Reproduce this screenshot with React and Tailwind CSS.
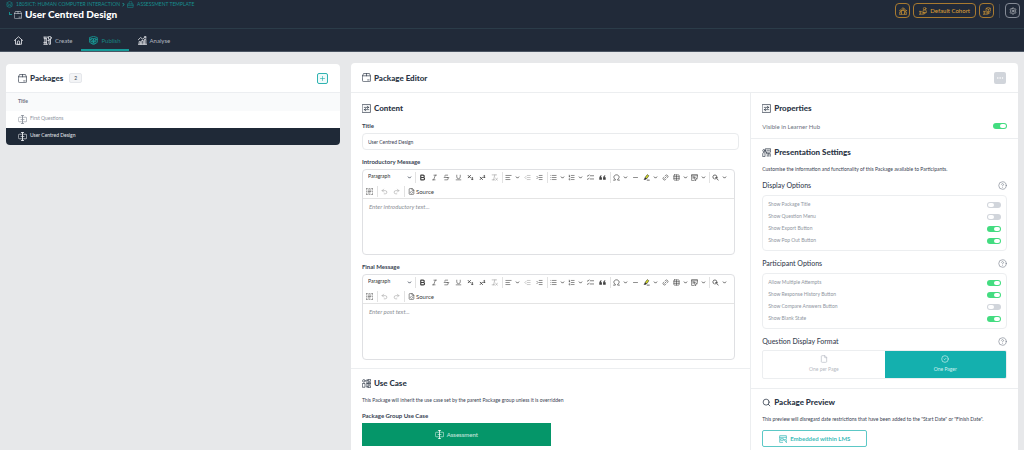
import React, { useState } from "react";
import {
  AlignLeft,
  Bold,
  ChevronDown,
  ChevronRight,
  CircleCheck,
  CircleHelp,
  Ellipsis,
  File,
  FileCode,
  IndentDecrease,
  IndentIncrease,
  Italic,
  Layers,
  Link2,
  List,
  ListOrdered,
  Minus,
  Plus,
  Redo2,
  Search,
  Settings,
  Strikethrough,
  Subscript,
  Superscript,
  Table,
  Underline,
  Undo2,
} from "lucide-react";

const Svg = ({ children, className, width = 1.8 }) => (
  <svg
    viewBox="0 0 24 24"
    fill="none"
    stroke="currentColor"
    strokeWidth={width}
    strokeLinecap="round"
    strokeLinejoin="round"
    className={className}
    aria-hidden="true"
  >
    {children}
  </svg>
);

const PackageIcon = ({ className }) => (
  <Svg className={className} width={1.8}>
    <path d="M1.500 7.500h21V21a2 2 0 0 1-2 2h-17a2 2 0 0 1-2-2z" />
    <path d="M1.500 7.500l2.500-6h16l2.500 6M12 7.500v-6M15 18.500h4" />
  </Svg>
);

const HomeIcon = ({ className }) => (
  <Svg className={className} width={2.2}>
    <path d="M1 12L12 2l11 10" />
    <path d="M4 10v12h16V10" />
    <path d="M9 22v-6a3 3 0 0 1 6 0v6z" />
  </Svg>
);

const CreateIcon = ({ className }) => (
  <Svg className={className} width={2.2}>
    <path d="M2 3h13M5 3v19M9 7v15M2 22h10M3 7h6" />
    <circle cx="18" cy="5" r="4" />
    <path d="M16 9v13h4V9M13 12h3M2 17h7" />
  </Svg>
);

const PublishIcon = ({ className }) => (
  <Svg className={className} width={2.2}>
    <path d="M2 4l10-3 10 3v13l-10 6-10-6z" />
    <rect x="6" y="7" width="12" height="8" />
    <path d="M9 12l3-3 3 3M12 9v9M2 9h4M18 9h4M7 19h10" />
  </Svg>
);

const AnalyseIcon = ({ className }) => (
  <Svg className={className} width={2.2}>
    <path d="M1 10l6-6 5 4 9-6M17 2h4v4" />
    <path d="M3 22v-7h4v7M10 22V12h4v10M17 22V9h4v13M1 22h22" />
  </Svg>
);

const AssessmentIcon = ({ className }) => (
  <Svg className={className}>
    <path d="M9 6H4a3 3 0 0 0-3 3v6a3 3 0 0 0 3 3h5M15 6h6a2 2 0 0 1 2 2v8a2 2 0 0 1-2 2h-6" />
    <path d="M12 1v22M9 1h6M9 23h6" strokeWidth="2.600" />
    <path d="M8 12h8" />
  </Svg>
);

const SlidersIcon = ({ className }) => (
  <Svg className={className}>
    <rect x="1.500" y="1.500" width="21" height="21" />
    <path d="M6 9h12M14 6l4 3-4 3M18 15H6M10 12l-4 3 4 3" />
  </Svg>
);

const UseCaseIcon = ({ className }) => (
  <Svg className={className}>
    <circle cx="5" cy="5" r="3.500" />
    <path d="M2 12h6v10H2zM13 12h9M13 3v18M13 3h4M13 21h4" />
    <rect x="17" y="1" width="6" height="5" />
    <rect x="17" y="9" width="6" height="5" />
    <rect x="17" y="18" width="6" height="5" />
  </Svg>
);

const PresentationIcon = ({ className }) => (
  <Svg className={className}>
    <rect x="10" y="2" width="13" height="9" />
    <circle cx="5" cy="7" r="3" />
    <path d="M2 22v-7a3 3 0 0 1 6 0v7zM13 6h7M12 11v4h6v7M18 15h4v7M14 18v4" />
  </Svg>
);

const BoxIcon = ({ className }) => (
  <Svg className={className}>
    <path d="M3 10h18v12H3zM7 10V6a5 5 0 0 1 10 0v4M3 15h18" />
  </Svg>
);

const GroupIcon = ({ className }) => (
  <Svg className={className}>
    <circle cx="12" cy="6" r="3.500" />
    <circle cx="4.500" cy="11" r="2.500" />
    <circle cx="19.500" cy="11" r="2.500" />
    <path d="M7 21v-6a5 5 0 0 1 10 0v6zM1 21v-3a3 3 0 0 1 6 0v3zM17 21v-3a3 3 0 0 1 6 0v3z" />
  </Svg>
);

const HandUserIcon = ({ className }) => (
  <Svg className={className}>
    <circle cx="17" cy="5" r="4" />
    <path d="M12 15v-2a5 5 0 0 1 10 0v2zM1 13h4v9H1zM5 14c4-1 5 1 7 3h4c2 0 2 2 0 2h-5M5 21c8 3 10 1 17-5" />
  </Svg>
);

const HandBoxIcon = ({ className }) => (
  <Svg className={className}>
    <path d="M10 4l6-3 6 3v8l-6 3-6-3zM10 4l6 3 6-3M16 7v8M1 13h4v9H1zM5 14c4-1 5 1 7 3h4c2 0 2 2 0 2h-5M5 21c8 3 10 1 17-5" />
  </Svg>
);

const QuoteIcon = ({ className }) => (
  <svg viewBox="0 0 24 24" fill="currentColor" className={className} aria-hidden="true">
    <path d="M8 4C4 5 1 9 1 14v6h9v-9H6c0-2 1-3 3-4zM21 4c-4 1-7 5-7 10v6h9v-9h-4c0-2 1-3 3-4z" />
  </svg>
);

const OmegaIcon = ({ className }) => (
  <Svg className={className} width={2.4}>
    <path d="M2 21h6v-3a9 8 0 1 1 8 0v3h6" />
  </Svg>
);

const HighlightIcon = ({ className }) => (
  <svg viewBox="0 0 24 24" className={className} aria-hidden="true">
    <path d="M7 12l8-10 5 4-7 10z" fill="#d9e021" stroke="#333" strokeWidth="2" />
    <path d="M7 12l6 4-4 4H2z" fill="#333" />
    <path d="M13 21h10" stroke="#333" strokeWidth="2.500" />
  </svg>
);

const EmbedIcon = ({ className }) => (
  <Svg className={className} width={2}>
    <path d="M22 12V2H2v20h9M2 6h20M6 10h5M6 14h3" />
    <path d="M11 11l11 5-5 1-1 5z" />
  </Svg>
);

const FindIcon = ({ className }) => (
  <Svg className={className} width={2.6}>
    <path d="M8 17a7 7 0 1 1 9-7M14 12l7 9M13 17v-5h5" />
  </Svg>
);

const SelectAllIcon = ({ className }) => (
  <Svg className={className} width={2}>
    <path d="M1 5V1h4M19 1h4v4M23 19v4h-4M5 23H1v-4M10 1h4M10 23h4M1 10v4M23 10v4" />
    <path d="M7 7h10M7 12h10M7 17h7" />
  </Svg>
);

const ClearFormatIcon = ({ className }) => (
  <Svg className={className} width={2.2}>
    <path d="M4 3h15M13 3L9 20M4 20h8M16 15l6 6M22 15l-6 6" />
  </Svg>
);

const TodoIcon = ({ className }) => (
  <Svg className={className} width={2.2}>
    <path d="M1 6l2 2 4-5M11 6h12M1 17l2 2 4-5M11 17h12" />
  </Svg>
);

const BrowserIcon = ({ className }) => (
  <Svg className={className} width={2.2}>
    <path d="M22 11V2H2v20h9M2 7h20M6 11h7v5H6zM15 14h7v8M15 14l7 8" />
  </Svg>
);

const Switch = ({ label, on, textClass }) => {
  const [checked, setChecked] = useState(on);
  return (
    <label className={`flex items-center justify-between ${textClass}`}>
      <span>{label}</span>
      <input
        type="checkbox"
        role="switch"
        checked={checked}
        onChange={() => setChecked(!checked)}
        className="h-1.5 w-3.5 shrink-0 appearance-none rounded-sm bg-[#d1d5db] p-px before:block before:h-1 before:w-1.5 before:rounded-xs before:bg-white checked:bg-[#43dc80] checked:before:ml-1.5"
      />
    </label>
  );
};

const Heading = ({ icon: Icon, children }) => (
  <h2 className="flex h-3 items-center gap-[3px] text-[8px] leading-3 font-black text-[#2b3545]">
    <Icon className="size-[9px]" />
    {children}
  </h2>
);

const Tool = ({ label, icon: Icon, dim, menu }) => (
  <button
    type="button"
    aria-label={label}
    className={`flex h-3.5 items-center justify-center gap-[3px] ${menu ? "w-[18px]" : "w-3"} ${
      dim ? "text-[#a3a3a3]" : "text-[#404040]"
    }`}
  >
    <Icon className="size-[7px]" />
    {menu && <ChevronDown className="size-[5px]" strokeWidth={4} />}
  </button>
);

const Sep = () => <span className="mx-px h-[11px] w-px bg-[#e2e2e2]" />;

const MessageEditor = ({ id, label, placeholder }) => (
  <div>
    <label htmlFor={id} className="block text-[6px] leading-2 font-bold text-[#374151]">
      {label}
    </label>
    <div className="mt-[3px] mr-1 overflow-hidden rounded-sm border border-[#dfe0e3]">
      <div className="border-b border-[#e4e4e4]">
        <div className="flex items-center">
          <div className="relative flex w-[51px] items-center">
            <select
              aria-label={`${label} style`}
              className="h-3.5 w-full appearance-none bg-transparent pl-[5px] text-[5px] font-medium text-[#404040]"
            >
              <option>Paragraph</option>
            </select>
            <ChevronDown className="pointer-events-none absolute right-0.5 size-[5px]" strokeWidth={4} />
          </div>
          <Sep />
          <Tool label="Bold" icon={(p) => <Bold {...p} strokeWidth={4} />} />
          <Tool label="Italic" icon={Italic} />
          <Tool label="Strikethrough" icon={Strikethrough} />
          <Tool label="Underline" icon={Underline} />
          <Tool label="Subscript" icon={(p) => <Subscript {...p} strokeWidth={3} />} />
          <Tool label="Superscript" icon={(p) => <Superscript {...p} strokeWidth={3} />} />
          <Tool label="Remove format" icon={ClearFormatIcon} dim />
          <Sep />
          <Tool label="Text alignment" icon={AlignLeft} menu />
          <Tool label="Decrease indent" icon={IndentDecrease} dim />
          <Tool label="Increase indent" icon={IndentIncrease} />
          <Sep />
          <Tool label="Bulleted list" icon={List} menu />
          <Tool label="Numbered list" icon={ListOrdered} menu />
          <Tool label="To-do list" icon={TodoIcon} />
          <Tool label="Block quote" icon={QuoteIcon} />
          <Sep />
          <Tool label="Special characters" icon={OmegaIcon} menu />
          <Tool label="Horizontal line" icon={Minus} />
          <Tool label="Highlight" icon={HighlightIcon} menu />
          <Tool label="Link" icon={(p) => <Link2 {...p} className="size-[7px] -rotate-45" />} />
          <Tool label="Insert table" icon={Table} menu />
          <Tool label="Embed" icon={EmbedIcon} menu />
          <Sep />
          <Tool label="Find and replace" icon={FindIcon} menu />
        </div>
        <div className="flex items-center pl-px">
          <Tool label="Select all" icon={SelectAllIcon} />
          <Sep />
          <Tool label="Undo" icon={Undo2} dim />
          <Tool label="Redo" icon={Redo2} dim />
          <Sep />
          <button
            type="button"
            className="flex h-3.5 items-center gap-px px-0.5 text-[6px] text-[#404040]"
          >
            <FileCode className="size-[7px]" />
            Source
          </button>
        </div>
      </div>
      <textarea
        id={id}
        placeholder={placeholder}
        className="block h-[55px] w-full resize-none px-1.5 py-1 text-[6px] leading-2 italic outline-none placeholder:text-[#8b8f96]"
      />
    </div>
  </div>
);

const SubHeading = ({ children }) => (
  <div className="flex h-2.5 items-center justify-between">
    <h3 className="text-[7px] font-medium text-[#374151]">{children}</h3>
    <button type="button" aria-label={`Help: ${children}`} className="text-[#6b7280]">
      <CircleHelp className="size-[9px]" strokeWidth={1.5} />
    </button>
  </div>
);

const OptionGroup = ({ title, options }) => (
  <div className="mb-[7px]">
    <SubHeading>{title}</SubHeading>
    <div className="mt-[5px] rounded-sm border border-[#eceef0] px-[5px] py-[3px]">
      {options.map(([label, on]) => (
        <Switch
          key={label}
          label={label}
          on={on}
          textClass="h-3 text-[5px] text-[#8f96a1]"
        />
      ))}
    </div>
  </div>
);

const displayOptions = [
  ["Show Package Title", false],
  ["Show Question Menu", false],
  ["Show Export Button", true],
  ["Show Pop Out Button", true],
];

const participantOptions = [
  ["Allow Multiple Attempts", true],
  ["Show Response History Button", true],
  ["Show Compare Answers Button", false],
  ["Show Blank State", true],
];

const App = () => {
  const [title, setTitle] = useState("User Centred Design");

  return (
    <div className="flex min-h-screen flex-col bg-[#e7e8ea] font-['Lato','Open_Sans',sans-serif] text-[#374151]">
      <header className="bg-[#212a39]">
        <div className="flex h-[29px] items-start justify-between border-b border-[#2b3c49] pr-1 pl-1.5">
          <div>
            <nav className="flex h-[9px] items-center text-[5px] text-[#178f8f]" aria-label="Breadcrumb">
              <a href="#course" className="flex items-center gap-[3px]">
                <Layers className="size-[7px]" />
                1805ICT: HUMAN COMPUTER INTERACTION
              </a>
              <ChevronRight className="mx-px size-[5px] text-[#20b5b0]" strokeWidth={4} />
              <a href="#template" className="flex items-center gap-[3px]">
                <BoxIcon className="size-[7px]" />
                ASSESSMENT TEMPLATE
              </a>
            </nav>
            <h1 className="flex h-[11px] items-center gap-0.5 pl-[3px] text-[10px] font-black text-white">
              <span className="mb-0.5 size-[3px] border-b border-l border-[#178f8f]" />
              <PackageIcon className="mr-px size-2 text-[#d1d5db]" />
              User Centred Design
            </h1>
          </div>
          <div className="flex items-center gap-[3px] pt-[3px] text-[#d99c35]">
            <button
              type="button"
              aria-label="Cohorts"
              className="flex size-[15px] items-center justify-center rounded-sm border border-[#a87a30]"
            >
              <GroupIcon className="size-2" />
            </button>
            <button
              type="button"
              className="flex h-[15px] items-center gap-[3px] rounded-sm border border-[#a87a30] px-[5px] text-[6px] font-medium"
            >
              <HandUserIcon className="size-2" />
              Default Cohort
            </button>
            <button
              type="button"
              aria-label="Assign package"
              className="flex size-[15px] items-center justify-center rounded-sm border border-[#a87a30]"
            >
              <HandBoxIcon className="size-2" />
            </button>
            <span className="mx-0.5 h-3.5 w-px bg-[#374151]" />
            <button
              type="button"
              aria-label="Settings"
              className="flex size-[15px] items-center justify-center rounded-sm border border-[#858b96] text-[#c5c8cd]"
            >
              <Settings className="size-2" />
            </button>
          </div>
        </div>
        <nav className="flex h-[23px] border-b border-[#4b5563] text-[6px] text-[#b3b8c0]" aria-label="Main">
          <a href="#home" aria-label="Home" className="flex w-[34px] items-center justify-end pr-[11px]">
            <HomeIcon className="size-[9px] text-[#e5e7eb]" />
          </a>
          <a href="#create" className="flex items-center gap-[3px] px-[9px] pt-px">
            <CreateIcon className="size-[9px] text-[#e5e7eb]" />
            Create
          </a>
          <a
            href="#publish"
            className="flex items-center gap-[3px] border-b-2 border-[#159a98] px-2 pt-0.5 text-[#178583]"
          >
            <PublishIcon className="size-[9px] text-[#17a09c]" />
            Publish
          </a>
          <a href="#analyse" className="flex items-center gap-[3px] px-[9px] pt-px">
            <AnalyseIcon className="size-[9px] text-[#e5e7eb]" />
            Analyse
          </a>
        </nav>
      </header>

      <main className="flex flex-1 items-stretch gap-[11px] px-1.5 pt-[11px]">
        <section className="mt-px w-[33%] self-start overflow-hidden rounded-sm bg-white">
          <div className="flex h-7 items-center justify-between px-3">
            <div className="flex items-center gap-1.5">
              <Heading icon={PackageIcon}>Packages</Heading>
              <span className="rounded-xs border border-[#e5e7eb] bg-[#f3f4f6] px-1 text-[5px] leading-2">
                2
              </span>
            </div>
            <button
              type="button"
              aria-label="Add package"
              className="flex size-[11px] items-center justify-center rounded-xs border border-[#2fb3b1] bg-[#effafa] text-[#14a8a6]"
            >
              <Plus className="size-[7px]" />
            </button>
          </div>
          <table className="w-full text-left text-[5px]">
            <thead>
              <tr className="h-[18px] border-t border-[#eceef1] bg-[#f9fafb]">
                <th className="px-3 font-bold text-[#6b7280]">Title</th>
              </tr>
            </thead>
            <tbody>
              <tr className="h-[17px] text-[#8f959f]">
                <td className="px-3">
                  <span className="flex items-center gap-[3px]">
                    <AssessmentIcon className="size-[9px]" />
                    First Questions
                  </span>
                </td>
              </tr>
              <tr className="h-[17px] bg-[#1f2937] text-[#e5e7eb]">
                <td className="px-3">
                  <span className="flex items-center gap-[3px]">
                    <AssessmentIcon className="size-[9px]" />
                    User Centred Design
                  </span>
                </td>
              </tr>
            </tbody>
          </table>
        </section>

        <section className="flex flex-1 flex-col rounded-t-sm bg-white">
          <div className="flex h-[30px] items-center justify-between border-b border-[#eceef0] pr-3 pl-[11px]">
            <Heading icon={PackageIcon}>Package Editor</Heading>
            <button
              type="button"
              aria-label="More actions"
              className="flex size-3 items-center justify-center rounded-xs bg-[#d1d5db] text-white"
            >
              <Ellipsis className="size-2" />
            </button>
          </div>

          <div className="flex flex-1">
            <div className="w-3/5 border-r border-[#eceef0]">
              <div className="border-b border-[#eceef0] px-[11px] pt-[9px] pb-2">
                <Heading icon={SlidersIcon}>Content</Heading>
                <label
                  htmlFor="package-title"
                  className="mt-2 block text-[6px] leading-2 font-bold text-[#374151]"
                >
                  Title
                </label>
                <input
                  id="package-title"
                  value={title}
                  onChange={(e) => setTitle(e.target.value)}
                  className="mt-[3px] mb-2 block h-[17px] w-full rounded-sm border border-[#e9ebed] px-[5px] text-[5px] text-[#374151] outline-none"
                />
                <div className="space-y-2">
                  <MessageEditor
                    id="intro-message"
                    label="Introductory Message"
                    placeholder="Enter introductory text..."
                  />
                  <MessageEditor
                    id="final-message"
                    label="Final Message"
                    placeholder="Enter post text..."
                  />
                </div>
              </div>
              <div className="px-[11px] pt-2">
                <Heading icon={UseCaseIcon}>Use Case</Heading>
                <p className="mt-[7px] text-[5px] leading-2">
                  This Package will inherit the use case set by the parent Package group unless it is
                  overridden
                </p>
                <h3 className="mt-2 text-[6px] leading-2 font-bold">Package Group Use Case</h3>
                <button
                  type="button"
                  className="mt-[3px] flex h-[23px] w-1/2 items-center justify-center gap-[3px] bg-[#059669] text-[6px] text-white/80"
                >
                  <AssessmentIcon className="size-[9px]" />
                  Assessment
                </button>
              </div>
            </div>

            <aside className="w-2/5">
              <div className="border-b border-[#eceef0] px-[11px] pt-[9px] pb-[7px]">
                <Heading icon={SlidersIcon}>Properties</Heading>
                <Switch
                  label="Visible in Learner Hub"
                  on={true}
                  textClass="mt-[7px] h-2.5 text-[6px] text-[#6b7280]"
                />
              </div>

              <div className="border-b border-[#eceef0] px-[11px] pt-[7px] pb-[9px]">
                <Heading icon={PresentationIcon}>Presentation Settings</Heading>
                <p className="mt-[7px] mb-[7px] text-[5px] leading-2">
                  Customise the information and functionality of this Package available to
                  Participants.
                </p>
                <OptionGroup title="Display Options" options={displayOptions} />
                <OptionGroup title="Participant Options" options={participantOptions} />
                <SubHeading>Question Display Format</SubHeading>
                <div className="mt-1 flex h-[29px] overflow-hidden rounded-xs border border-[#eceef0] text-[5px]">
                  <button
                    type="button"
                    className="flex flex-1 flex-col items-center justify-center gap-[3px] text-[#b5bac2]"
                  >
                    <File className="size-2" />
                    One per Page
                  </button>
                  <button
                    type="button"
                    className="flex flex-1 flex-col items-center justify-center gap-[3px] bg-[#14b0ae] text-[#d0f1f0]"
                  >
                    <CircleCheck className="size-2" />
                    One Pager
                  </button>
                </div>
              </div>

              <div className="px-[11px] pt-[7px]">
                <Heading icon={Search}>Package Preview</Heading>
                <p className="mt-[7px] text-[5px] leading-2">
                  This preview will disregard date restrictions that have been added to the "Start
                  Date" or "Finish Date".
                </p>
                <button
                  type="button"
                  className="mt-[7px] flex h-[17px] items-center gap-[3px] rounded-xs border border-[#5cc8c6] px-4 text-[6px] font-bold text-[#3fbcba]"
                >
                  <BrowserIcon className="size-2" />
                  Embedded within LMS
                </button>
              </div>
            </aside>
          </div>
        </section>
      </main>
    </div>
  );
};

export default App;
